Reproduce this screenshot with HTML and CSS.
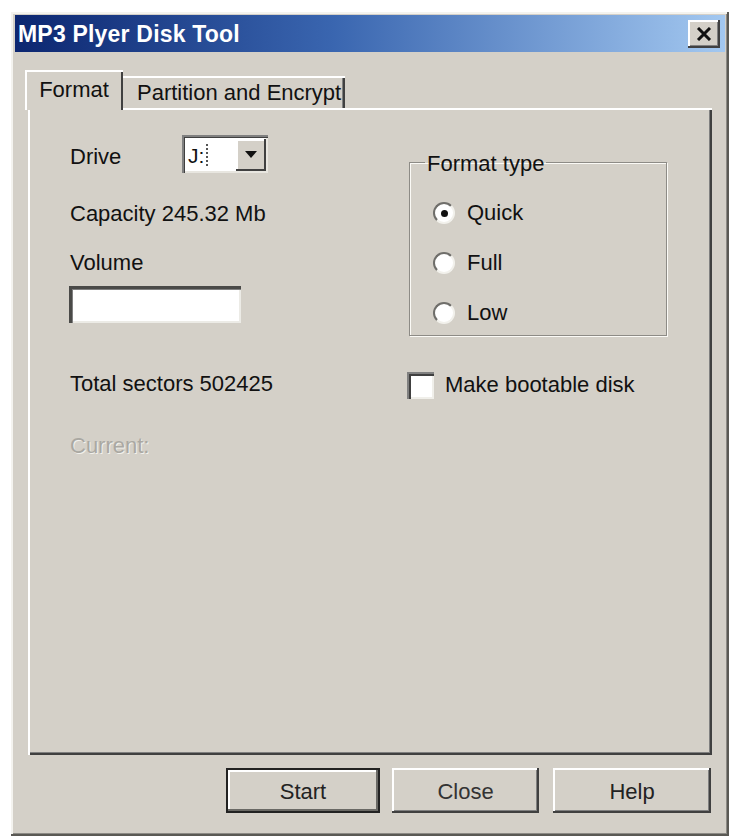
FILE: index.html
```html
<!DOCTYPE html>
<html>
<head>
<meta charset="utf-8">
<link rel="stylesheet" href="styles.css">
</head>
<body>
<div class="window">
  <div class="titlebar">
    <span class="title">MP3 Plyer Disk Tool</span>
    <div class="xbtn"><svg width="16" height="14" viewBox="0 0 16 14"><path d="M2 1 L14 13 M14 1 L2 13" stroke="#111" stroke-width="3"/></svg></div>
  </div>
  <div class="body">
    <div class="tabs">
      <div class="tab active">Format</div>
      <div class="tab">Partition and Encrypt</div>
    </div>
    <div class="panel">
      <div class="col-left">
        <div class="drive-row">
          <span class="lbl-drive">Drive</span>
          <div class="combo">
            <span class="combo-val">J:</span><span class="focus"></span>
            <span class="combo-btn"><svg width="12" height="7" viewBox="0 0 12 7"><path d="M0 0 H12 L6 7 Z" fill="#111"/></svg></span>
          </div>
        </div>
        <div class="line cap">Capacity 245.32 Mb</div>
        <div class="line vol">Volume</div>
        <div class="textbox"></div>
        <div class="line total">Total sectors 502425</div>
        <div class="line current">Current:</div>
      </div>
      <div class="col-right">
        <fieldset class="group">
          <legend>Format type</legend>
          <div class="opt first"><span class="radio on"></span>Quick</div>
          <div class="opt"><span class="radio"></span>Full</div>
          <div class="opt"><span class="radio"></span>Low</div>
        </fieldset>
        <div class="check-row"><span class="checkbox"></span>Make bootable disk</div>
      </div>
    </div>
    <div class="buttons">
      <div class="btn btn-start">Start</div>
      <div class="btn btn-close">Close</div>
      <div class="btn btn-help">Help</div>
    </div>
  </div>
</div>
</body>
</html>
```
FILE: styles.css
```css
* { box-sizing: border-box; }
html, body { margin: 0; padding: 0; background: #ffffff; }
body { font-family: "Liberation Sans", Arial, sans-serif; font-size: 22px; color: #111; }

.window {
  margin: 12px 0 0 11px;
  width: 718px;
  height: 824px;
  background: #d4d0c8;
  padding: 3px 4px 4px 4px;
  box-shadow: inset -2px -2px #5a5954, inset 2px 2px #f4f3ef, inset -3px -3px #8c8a85;
}

.titlebar {
  height: 37px;
  background: linear-gradient(to right, #0c2670 0%, #3a66b0 45%, #a3c8f0 100%);
  display: flex;
  align-items: center;
  justify-content: space-between;
  padding: 2px 5px 0 3px;
}
.title { color: #fff; font-weight: bold; font-size: 23px; letter-spacing: 0.2px; }
.xbtn {
  width: 32px; height: 28px;
  margin-top: -2px;
  background: #d4d0c8;
  display: flex; align-items: center; justify-content: center;
  box-shadow: inset -2px -2px #404040, inset 2px 2px #fff, inset -3px -3px #808080;
}

.body { padding: 18px 13px 0 13px; }

.tabs { display: flex; align-items: flex-end; height: 38px; margin-left: -3px; position: relative; z-index: 1; }
.tab {
  height: 32px;
  padding: 2px 4px 0 14px;
  display: flex; align-items: center;
  background: #d4d0c8;
  box-shadow: inset 0 2px #fff, inset -2px 0 #404040, inset -3px 0 #808080;
}
.tab.active {
  height: 40px;
  margin-bottom: -2px;
  width: 98px;
  padding: 0 0 1px 0;
  justify-content: center;
  box-shadow: inset 2px 2px #fff, inset -2px 0 #404040;
}

.panel {
  height: 647px;
  display: flex;
  padding: 27px 0 0 42px;
  background: #d4d0c8;
  box-shadow: inset 2px 2px #fff, inset -2px -2px #404040, inset -3px -3px #808080;
}
.col-left { width: 337px; display: flex; flex-direction: column; align-items: flex-start; }
.line { height: 26px; line-height: 32px; }
.drive-row { display: flex; align-items: center; height: 38px; }
.lbl-drive { width: 112px; padding-top: 6px; }
.combo {
  width: 86px; height: 38px;
  background: #fff;
  display: flex; align-items: center;
  padding: 3px 2px 2px 6px;
  box-shadow: inset 2px 2px #808080, inset 3px 3px #404040, inset -2px -2px #e8e6e0;
}
.combo-val { font-size: 21px; padding-top: 2px; }
.focus { width: 4px; height: 22px; border-left: 2px dotted #555; margin-left: 2px; }
.combo-btn {
  margin-left: auto;
  width: 30px; height: 32px;
  background: #d4d0c8;
  display: flex; align-items: center; justify-content: center;
  box-shadow: inset -2px -2px #404040, inset 2px 2px #fff;
}
.cap { margin-top: 25px; }
.vol { margin-top: 23px; }
.textbox {
  margin-top: 13px; margin-left: -1px;
  width: 172px; height: 37px;
  background: #fff;
  box-shadow: inset 3px 3px #4a4a48, inset 4px 4px #808080, inset -2px -2px #ecebe6;
}
.total { margin-top: 45px; }
.current { margin-top: 36px; color: #aaa8a2; text-shadow: 1px 1px 0 #f2f1ec; }

.col-right { display: flex; flex-direction: column; }
.group {
  margin: 14px 0 0 2px;
  width: 258px;
  padding: 0 0 8px 23px;
  min-width: 0;
  border: 1px solid #8d8b86;
  box-shadow: inset 1px 1px #fbfaf6, 1px 1px #fbfaf6;
}
.group legend { margin-left: -8px; padding: 3px 2px 0 2px; line-height: 24px; }
.opt { display: flex; align-items: center; height: 30px; margin-top: 20px; }
.opt.first { margin-top: 21px; }
.opt { padding-top: 2px; }
.radio {
  width: 22px; height: 22px;
  border-radius: 50%;
  background: #fff;
  border: 2px solid;
  border-color: #6f6e6a #f2f1ec #f2f1ec #6f6e6a;
  margin-right: 12px;
  display: flex; align-items: center; justify-content: center;
}
.radio.on::after { content: ""; width: 7px; height: 7px; border-radius: 50%; background: #111; }

.check-row { display: flex; align-items: center; height: 28px; margin-top: 35px; }
.checkbox {
  width: 27px; height: 27px;
  background: #fff;
  margin-right: 11px;
  box-shadow: inset 2px 2px #808080, inset 4px 4px #404040, inset -2px -2px #f0efea;
}

.buttons { display: flex; justify-content: flex-end; margin-top: 13px; padding-right: 1px; }
.btn {
  height: 45px;
  display: flex; align-items: center; justify-content: center;
  padding-top: 2px;
  background: #d4d0c8;
  box-shadow: inset -2px -2px #404040, inset 2px 2px #fff, inset -3px -3px #808080;
  color: #222;
}
.btn-start { width: 154px; box-shadow: inset 0 0 0 2px #222, inset -4px -4px #6a6965, inset 4px 4px #fff; }
.btn-close { width: 147px; margin-left: 12px; color: #333; }
.btn-help { width: 158px; margin-left: 14px; }
```
